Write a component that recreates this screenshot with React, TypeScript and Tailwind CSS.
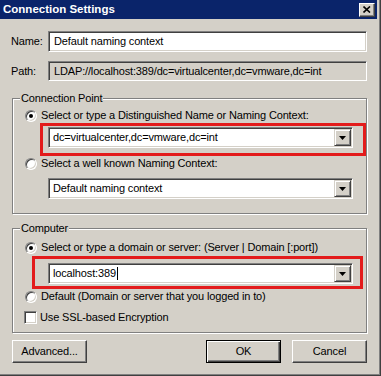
const sunken =
  "border border-t-[#808080] border-l-[#808080] border-r-white border-b-white shadow-[inset_1px_1px_0_#404040,inset_-1px_-1px_0_#d4d0c8]";
const raised =
  "border border-t-[#d4d0c8] border-l-[#d4d0c8] border-r-[#404040] border-b-[#404040] shadow-[inset_1px_1px_0_#fff,inset_-1px_-1px_0_#808080]";
const pushButton =
  "border border-t-white border-l-white border-r-[#404040] border-b-[#404040] shadow-[inset_-1px_-1px_0_#808080]";

function Arrow() {
  return (
    <svg width="7" height="4" viewBox="0 0 7 4">
      <polygon points="0,0 7,0 3.5,4" fill="#000" />
    </svg>
  );
}

function Combo({ value, caret }: { value: string; caret?: boolean }) {
  return (
    <div className={`flex h-[21px] w-[305px] items-center bg-white p-[1px] ${sunken}`}>
      <div className="flex flex-1 items-center pl-[3px] leading-[13px]">
        {value}
        {caret && <span className="ml-[1px] inline-block h-[13px] w-px bg-black" />}
      </div>
      <div className={`flex h-[17px] w-[17px] items-center justify-center bg-[#d4d0c8] ${raised}`}>
        <Arrow />
      </div>
    </div>
  );
}

function Radio({ checked, label }: { checked?: boolean; label: string }) {
  return (
    <div className="flex h-[13px] items-center gap-[4px] leading-[13px]">
      <div
        className={`flex h-[12px] w-[12px] items-center justify-center rounded-full bg-white ${sunken}`}
      >
        {checked && <div className="h-[4px] w-[4px] rounded-full bg-black" />}
      </div>
      <span>{label}</span>
    </div>
  );
}

function GroupBox({
  title,
  height,
  children,
}: {
  title: string;
  height: string;
  children: React.ReactNode;
}) {
  return (
    <div
      className={`relative ml-[1px] w-[355px] border border-[#808080] shadow-[inset_1px_1px_0_#fff,1px_1px_0_#fff] ${height}`}
    >
      <span className="absolute left-[7px] top-[-7px] bg-[#d4d0c8] px-[1px] leading-[13px]">
        {title}
      </span>
      {children}
    </div>
  );
}

function Button({ label, isDefault }: { label: string; isDefault?: boolean }) {
  return (
    <div
      className={`flex h-[23px] w-[75px] items-center justify-center bg-[#d4d0c8] ${
        isDefault
          ? "border border-black shadow-[inset_1px_1px_0_#fff,inset_-1px_-1px_0_#404040,inset_-2px_-2px_0_#808080]"
          : pushButton
      }`}
    >
      {label}
    </div>
  );
}

export default function App() {
  return (
    <div className="h-[376px] w-[381px] overflow-hidden bg-[#d4d0c8] font-['Liberation_Sans',Arial,sans-serif] text-[11px] tracking-[-0.15px] text-black shadow-[inset_-1px_-1px_0_#404040,inset_-2px_-2px_0_#808080]">
      <div className="flex h-[19px] w-[377px] items-center bg-[#0a246a] pl-[3px]">
        <span className="text-[11.5px] font-bold tracking-normal text-white">Connection Settings</span>
        <div
          className={`ml-auto mr-[2px] flex h-[14px] w-[16px] items-center justify-center bg-[#d4d0c8] ${pushButton}`}
        >
          <svg width="8" height="7" viewBox="0 0 8 7">
            <path d="M0.5 0.5 L7 6.5 M7 0.5 L0.5 6.5" stroke="#000" strokeWidth="1.6" />
          </svg>
        </div>
      </div>

      <div className="flex w-[377px] flex-col pl-[11px] pr-[10px]">
        <div className="mt-[12px] flex h-[21px] items-center">
          <span className="w-[37px]">Name:</span>
          <div className={`flex h-[21px] flex-1 items-center bg-white pl-[5px] ${sunken}`}>
            Default naming context
          </div>
        </div>

        <div className="mt-[9px] flex h-[20px] items-center">
          <span className="w-[37px]">Path:</span>
          <div className={`flex h-[20px] flex-1 items-center bg-[#d4d0c8] pl-[5px] ${sunken}`}>
            LDAP://localhost:389/dc=virtualcenter,dc=vmware,dc=int
          </div>
        </div>

        <div className="mt-[17px]">
          <GroupBox title="Connection Point" height="h-[116px]">
            <div className="flex flex-col pl-[12px] pt-[10px]">
              <Radio checked label="Select or type a Distinguished Name or Naming Context:" />
              <div className="ml-[15px] mt-[1px] w-[326px] border-[3px] border-[#e31b1b] pb-[5px] pl-[5px] pt-[1px]">
                <Combo value="dc=virtualcenter,dc=vmware,dc=int" />
              </div>
              <div className="mt-[1px]">
                <Radio label="Select a well known Naming Context:" />
              </div>
              <div className="ml-[23px] mt-[8px]">
                <Combo value="Default naming context" />
              </div>
            </div>
          </GroupBox>
        </div>

        <div className="mt-[14px]">
          <GroupBox title="Computer" height="h-[105px]">
            <div className="flex flex-col pl-[12px] pt-[12px]">
              <Radio checked label="Select or type a domain or server: (Server | Domain [:port])" />
              <div className="ml-[7px] mt-[2px] w-[331px] border-[3px] border-[#e31b1b] pb-[2px] pl-[13px] pt-[4px]">
                <Combo value="localhost:389" caret />
              </div>
              <div className="mt-[1px]">
                <Radio label="Default (Domain or server that you logged in to)" />
              </div>
              <div className="-ml-[1px] mt-[8px] flex h-[13px] items-center gap-[3px] leading-[13px]">
                <div className={`h-[13px] w-[13px] bg-white ${sunken}`} />
                <span>Use SSL-based Encryption</span>
              </div>
            </div>
          </GroupBox>
        </div>

        <div className="mt-[7px] flex items-center">
          <div className="ml-[1px]">
            <Button label="Advanced..." />
          </div>
          <div className="ml-auto flex gap-[11px]">
            <Button label="OK" isDefault />
            <Button label="Cancel" />
          </div>
        </div>
      </div>
    </div>
  );
}
